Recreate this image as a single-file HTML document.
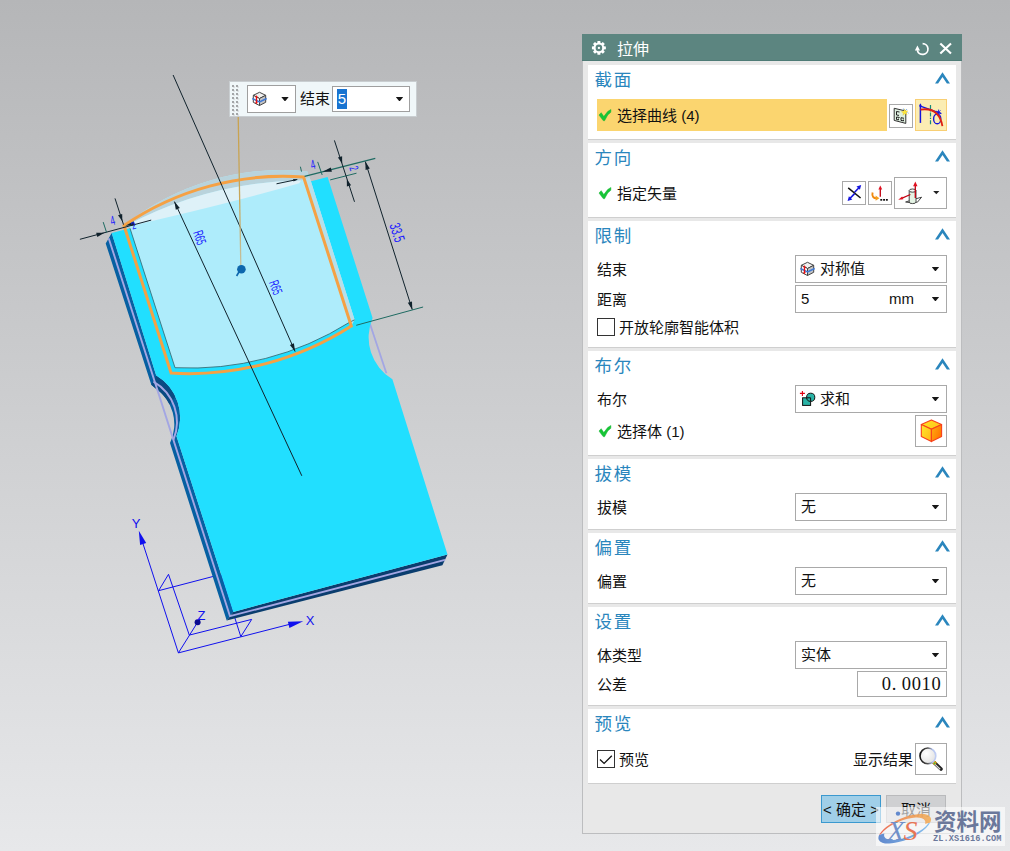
<!DOCTYPE html>
<html lang="zh-CN">
<head>
<meta charset="utf-8">
<title>拉伸</title>
<style>
*{box-sizing:border-box;margin:0;padding:0}
html,body{width:1010px;height:851px;overflow:hidden}
body{position:relative;font-family:"Liberation Sans","Noto Sans CJK SC",sans-serif;font-size:15px;color:#111;
 background:linear-gradient(180deg,#b5b6b8 0%,#e7e8ea 100%)}
.abs{position:absolute}
.cj{color:inherit}
#scene{position:absolute;left:0;top:0;width:1010px;height:851px}
/* dialog */
#dlg{position:absolute;left:582px;top:34px;width:380px;height:800px;background:#e8e8e8;border:1px solid #bcbdbf;border-top:none}
#ttl{position:absolute;left:-1px;top:0;width:380px;height:27px;background:#5c8580;border-bottom:1px solid #4f7b76;color:#fff;font-size:16px;line-height:26px}
#ttl span{position:absolute;left:35px;top:2.5px}
.sec{position:absolute;left:5px;width:368px;background:#fff;border-bottom:1px solid #cfcfcf}
.hd{position:absolute;left:6.5px;top:4px;font-size:17.5px;letter-spacing:1.8px;line-height:22px;color:#2a86bd;white-space:nowrap}
.chev{position:absolute;left:347px;top:7.3px;width:15px;height:12px}
.lbl{position:absolute;left:9px;line-height:20px;white-space:nowrap;margin-top:1px}
.combo{position:absolute;left:207px;width:152px;height:28px;border:1px solid #a9a9a9;background:#fff;line-height:26px;white-space:nowrap}
.combo .tx{position:absolute;left:5px;top:0}
.combo .ar,.ar2{position:absolute;right:6.9px;top:11px;width:7.4px;height:4.4px;background:#161616;clip-path:polygon(0 0,100% 0,50% 100%)}
.btn{position:absolute;border:1px solid #a9a9a9;background:#fff}
.chk{position:absolute;left:9px;width:18px;height:18px;border:1px solid #333;background:#fff}
.tick{position:absolute;left:9px;width:14px;height:12px}
</style>
</head>
<body>
<svg id="scene" viewBox="0 0 1010 851">
<polyline points="141.3,538.5 178.4,652.9 292.0,623.7" fill="none" stroke="#1010ee" stroke-width="1"/>
<polyline points="158.6,590.7 221.0,574.4 240.8,636.6" fill="none" stroke="#1010ee" stroke-width="1"/>
<polyline points="158.6,590.7 168.5,574.3 189.3,635.1 251.7,619.4 240.8,636.6" fill="none" stroke="#1010ee" stroke-width="1"/>
<polyline points="178.4,652.9 196.5,624.0" fill="none" stroke="#1010ee" stroke-width="1"/>
<path d="M138.8,530.7 L146.2,543.0 L140.1,545.0 Z" fill="#1010ee"/>
<path d="M303.2,621.2 L289.4,628.0 L287.9,621.8 Z" fill="#1010ee"/>
<circle cx="197.6" cy="622.2" r="3" fill="#0a0a90"/>
<text x="310" y="624.5" font-family="Liberation Sans, sans-serif" font-size="13" fill="#1010ee" text-anchor="middle">X</text>
<text x="136.2" y="528" font-family="Liberation Sans, sans-serif" font-size="13" fill="#1010ee" text-anchor="middle">Y</text>
<text x="201.5" y="619.5" font-family="Liberation Sans, sans-serif" font-size="13" fill="#1010ee" text-anchor="middle">Z</text>
<path d="M111.7,232.9 L156.2,375.4 A49.3,49.3 0 0 1 176.5,436.3 L233.3,611.9 L226.7,620.6 L170,443 A43.6,43.6 0 0 0 154.8,387.8 L151.3,384.8 L105.7,243.4 Z" fill="#0660a2"/>
<path d="M156.2,375.4 A49.3,49.3 0 0 1 175.5,396.7 L169.6,404.6 A43.6,43.6 0 0 0 154.8,387.8 L151.3,384.8 Z" fill="#0a4a82"/>
<path d="M233.3,611.9 L447.5,554.5 L442.4,565.2 L226.7,620.6 Z" fill="#0a3d6e"/>
<path d="M108.7,238.2 L230.0,616.2 L445,559.8" fill="none" stroke="#a3a6e3" stroke-width="1.9" stroke-linejoin="round"/>
<path d="M153.4,381.6 A46.4,46.4 0 0 1 173.4,439.8" fill="none" stroke="#a3a6e3" stroke-width="1.9"/>
<path d="M370.1,324.3 L386.4,373.3" fill="none" stroke="#a3a6e3" stroke-width="1.8"/>
<path d="M111.7,232.9 L327.6,177.0 L372.6,317.9 A49,49 0 0 0 392.4,379.3 L447.5,554.5 L233.3,611.9 L176.5,436.3 A49.3,49.3 0 0 0 156.2,375.4 Z" fill="#21dfff"/>
<path d="M127,226.5 L124.0,225.5 A252,252 0 0 1 307.2,171.4 L310.8,181 L354.6,319.8 L349.5,322.3 A300,300 0 0 1 175,367.7 L129.6,227 Z" fill="#aeecfb"/>
<path d="M303.6,177.1 L307.2,171.4 L310.8,181 L354.6,319.8 L351.3,326.0 Z" fill="#b7dfea"/>
<path d="M124.0,225.5 A252,252 0 0 1 307.2,171.4 L309.4,177.6 L301,180.4 A385,385 0 0 0 125.5,226.1 Z" fill="#b9d3dc"/>
<path d="M125.5,226.1 A385,385 0 0 1 301,180.4 L299.3,183.3 Q230,203.4 127,226.8 Z" fill="#def1f8"/>
<path d="M130,228.3 L175,367.7 A300,300 0 0 0 349.5,322.3 L354.6,319.8" fill="none" stroke="#3a6f78" stroke-width="0.9"/>
<path d="M124.0,225.5 A282.5,282.5 0 0 1 303.6,177.1 L351.3,326.0 A300,300 0 0 1 171.1,373.1 Z" fill="none" stroke="#f5a144" stroke-width="3" stroke-linejoin="miter"/>
<line x1="173.1" y1="75" x2="295.1" y2="351.5" stroke="#10222c" stroke-width="1"/>
<path d="M295.1,351.5 L289.9,345.1 L293.9,343.3 Z" fill="#10222c"/>
<line x1="301.8" y1="475.8" x2="174.4" y2="201.6" stroke="#10222c" stroke-width="1"/>
<path d="M174.4,201.6 L179.8,207.9 L175.8,209.8 Z" fill="#10222c"/>
<line x1="79.9" y1="239.3" x2="151.2" y2="220.1" stroke="#10222c" stroke-width="1"/>
<path d="M104.5,232.8 L97.3,237.0 L96.2,232.8 Z" fill="#10222c"/>
<path d="M125.5,225.7 L133.6,221.2 L134.8,225.5 Z" fill="#10222c"/>
<line x1="115" y1="198.4" x2="123.5" y2="224.6" stroke="#10222c" stroke-width="1"/>
<path d="M122.3,221.2 L118.0,215.2 L122.2,213.9 Z" fill="#10222c"/>
<line x1="103.2" y1="222.1" x2="106.6" y2="232.5" stroke="#1f6b62" stroke-width="1"/>
<line x1="304.6" y1="176.4" x2="375.3" y2="158.4" stroke="#1f6b62" stroke-width="1.2"/>
<line x1="330.2" y1="179.9" x2="356.5" y2="173.2" stroke="#1f6b62" stroke-width="1"/>
<line x1="334.4" y1="140.4" x2="354.5" y2="201.8" stroke="#10222c" stroke-width="1"/>
<path d="M342.2,163.6 L337.9,157.6 L342.1,156.3 Z" fill="#10222c"/>
<path d="M346.8,179.2 L351.1,185.2 L346.9,186.5 Z" fill="#10222c"/>
<path d="M322.6,171.8 L330.8,167.4 L331.9,171.7 Z" fill="#10222c"/>
<line x1="300.4" y1="166.7" x2="301.5" y2="171.6" stroke="#1f6b62" stroke-width="1"/>
<line x1="317.7" y1="161.9" x2="322.2" y2="175" stroke="#1f6b62" stroke-width="1"/>
<line x1="276.5" y1="183.8" x2="297.3" y2="179.5" stroke="#10222c" stroke-width="1"/>
<path d="M297.3,179.5 L293.6,181.5 L293.1,179.1 Z" fill="#10222c"/>
<line x1="365.3" y1="161.6" x2="412.3" y2="309.7" stroke="#10222c" stroke-width="1"/>
<path d="M365.3,161.6 L369.8,168.6 L365.6,169.9 Z" fill="#10222c"/>
<path d="M412.3,309.7 L407.8,302.7 L412.0,301.4 Z" fill="#10222c"/>
<line x1="356.2" y1="325.3" x2="423.1" y2="307" stroke="#1f6b62" stroke-width="1"/>
<text transform="translate(192.9,232.5) rotate(71) scale(0.55,1)" font-family="Liberation Sans, sans-serif" font-size="14" fill="#1c1cff">R65</text>
<text transform="translate(268.8,282.5) rotate(69) scale(0.55,1)" font-family="Liberation Sans, sans-serif" font-size="14" fill="#1c1cff">R65</text>
<text transform="translate(389.3,225.0) rotate(72.5) scale(0.64,1)" font-family="Liberation Sans, sans-serif" font-size="15.3" fill="#1c1cff">33.5</text>
<text transform="translate(111.6,225.4) rotate(-14) scale(0.62,1)" font-family="Liberation Sans, sans-serif" font-size="13.2" fill="#1c1cff">4</text>
<text transform="translate(311.8,169.4) rotate(-14) scale(0.62,1)" font-family="Liberation Sans, sans-serif" font-size="13.2" fill="#1c1cff">4</text>
<text transform="translate(349.2,167.6) rotate(74) scale(0.6,1)" font-family="Liberation Sans, sans-serif" font-size="12.5" fill="#1c1cff">2</text>
<text transform="translate(132.5,229.5) rotate(-14) scale(0.77,1)" font-family="Liberation Sans, sans-serif" font-size="9.8" fill="#1c1cff">2</text>
<defs><linearGradient id="tan" x1="0" y1="0" x2="0" y2="1"><stop offset="0" stop-color="#c9a24e"/><stop offset="0.55" stop-color="#c8a659"/><stop offset="1" stop-color="#c4c1a0"/></linearGradient></defs>
<path d="M238.2,116 L240.8,265" stroke="url(#tan)" stroke-width="1.3" fill="none"/>
<circle cx="241.4" cy="269.2" r="4.3" fill="#0d67ad"/><path d="M239.5,271 L236.6,276" stroke="#0d67ad" stroke-width="1.6"/>
</svg>

<div id="osd" class="abs" style="left:229px;top:81px;width:188px;height:36px;background:#f0f7f9;border:1px solid #c9ced1">
 <svg class="abs" style="left:0px;top:0px" width="12" height="34" viewBox="0 0 12 34"><g fill="#dde1e3"><rect x="3" y="4" width="2" height="2"/><rect x="7" y="4" width="2" height="2"/><rect x="3" y="8" width="2" height="2"/><rect x="7" y="8" width="2" height="2"/><rect x="3" y="12" width="2" height="2"/><rect x="7" y="12" width="2" height="2"/><rect x="3" y="16" width="2" height="2"/><rect x="7" y="16" width="2" height="2"/><rect x="3" y="20" width="2" height="2"/><rect x="7" y="20" width="2" height="2"/><rect x="3" y="24" width="2" height="2"/><rect x="7" y="24" width="2" height="2"/><rect x="3" y="28" width="2" height="2"/><rect x="7" y="28" width="2" height="2"/><rect x="3" y="32" width="2" height="2"/><rect x="7" y="32" width="2" height="2"/></g><g fill="#a3a6a8"><rect x="2" y="3" width="2" height="2"/><rect x="6" y="3" width="2" height="2"/><rect x="2" y="7" width="2" height="2"/><rect x="6" y="7" width="2" height="2"/><rect x="2" y="11" width="2" height="2"/><rect x="6" y="11" width="2" height="2"/><rect x="2" y="15" width="2" height="2"/><rect x="6" y="15" width="2" height="2"/><rect x="2" y="19" width="2" height="2"/><rect x="6" y="19" width="2" height="2"/><rect x="2" y="23" width="2" height="2"/><rect x="6" y="23" width="2" height="2"/><rect x="2" y="27" width="2" height="2"/><rect x="6" y="27" width="2" height="2"/><rect x="2" y="31" width="2" height="2"/><rect x="6" y="31" width="2" height="2"/></g></svg>
 <div class="abs" style="left:17px;top:3px;width:49px;height:28px;border:1px solid #9f9f9f;background:#fff"><i class="ar2" style="left:33.3px;right:auto;top:11px"></i></div>
 <div class="abs" style="left:70px;top:7px;line-height:20px;white-space:nowrap"><span class="cj">结束</span></div>
 <div class="abs" style="left:102px;top:4px;width:78px;height:26px;border:1px solid #9f9f9f;background:#fff">
  <span class="abs" style="left:4px;top:2px;width:10px;height:20px;background:#1874d1;color:#fff;line-height:20px;text-align:center">5</span>
  <i class="ar2" style="left:62.8px;right:auto;top:10px"></i>
 </div>
</div>

<div id="dlg">
 <div id="ttl"><span class="cj">拉伸</span></div>

 <div class="sec" style="top:31px;height:75px">
  <div class="hd"><span class="cj">截面</span></div>
  <svg class="chev" viewBox="0 0 15 12"><path d="M0 11.6 L7.5 0.2 L15 11.6 L11.9 11.6 L7.5 4.9 L3.1 11.6Z" fill="#2a86bd"/></svg>
  <div class="abs" style="left:9px;top:34px;width:290px;height:32px;background:#fbd56f"></div>
  <div class="lbl" style="left:29px;top:40px"><span class="cj">选择曲线</span></div><div class="lbl" style="left:93.2px;top:40px">(4)</div>
  <div class="btn" style="left:301px;top:39px;width:24px;height:24px"></div>
  <div class="btn" style="left:327px;top:34px;width:32px;height:32px;background:#fbedb3;border-color:#f8cf74"></div>
 </div>

 <div class="sec" style="top:109px;height:75px">
  <div class="hd"><span class="cj">方向</span></div>
  <svg class="chev" viewBox="0 0 15 12"><path d="M0 11.6 L7.5 0.2 L15 11.6 L11.9 11.6 L7.5 4.9 L3.1 11.6Z" fill="#2a86bd"/></svg>
  <div class="lbl" style="left:29px;top:40px"><span class="cj">指定矢量</span></div>
  <div class="btn" style="left:254px;top:38px;width:24px;height:24px"></div>
  <div class="btn" style="left:280px;top:38px;width:24px;height:24px"></div>
  <div class="btn" style="left:306px;top:34px;width:53px;height:32px"></div>
 </div>

 <div class="sec" style="top:187px;height:127px">
  <div class="hd"><span class="cj">限制</span></div>
  <svg class="chev" viewBox="0 0 15 12"><path d="M0 11.6 L7.5 0.2 L15 11.6 L11.9 11.6 L7.5 4.9 L3.1 11.6Z" fill="#2a86bd"/></svg>
  <div class="lbl" style="top:38px"><span class="cj">结束</span></div>
  <div class="combo" style="top:34px"><span class="tx" style="left:24px"><span class="cj">对称值</span></span><i class="ar"></i></div>
  <div class="lbl" style="top:68px"><span class="cj">距离</span></div>
  <div class="combo" style="top:64px"><span class="tx">5</span><span class="tx" style="left:93px">mm</span><i class="ar"></i></div>
  <div class="chk" style="top:97px"></div>
  <div class="lbl" style="left:31px;top:96px"><span class="cj">开放轮廓智能体积</span></div>
 </div>

 <div class="sec" style="top:317px;height:105px">
  <div class="hd"><span class="cj">布尔</span></div>
  <svg class="chev" viewBox="0 0 15 12"><path d="M0 11.6 L7.5 0.2 L15 11.6 L11.9 11.6 L7.5 4.9 L3.1 11.6Z" fill="#2a86bd"/></svg>
  <div class="lbl" style="top:38px"><span class="cj">布尔</span></div>
  <div class="combo" style="top:34px"><span class="tx" style="left:24px"><span class="cj">求和</span></span><i class="ar"></i></div>
  <div class="lbl" style="left:29px;top:70px"><span class="cj">选择体</span></div><div class="lbl" style="left:78.2px;top:70px">(1)</div>
  <div class="btn" style="left:327px;top:64px;width:32px;height:32px"></div>
 </div>

 <div class="sec" style="top:425px;height:71px">
  <div class="hd"><span class="cj">拔模</span></div>
  <svg class="chev" viewBox="0 0 15 12"><path d="M0 11.6 L7.5 0.2 L15 11.6 L11.9 11.6 L7.5 4.9 L3.1 11.6Z" fill="#2a86bd"/></svg>
  <div class="lbl" style="top:38px"><span class="cj">拔模</span></div>
  <div class="combo" style="top:34px"><span class="tx"><span class="cj">无</span></span><i class="ar"></i></div>
 </div>

 <div class="sec" style="top:499px;height:71px">
  <div class="hd"><span class="cj">偏置</span></div>
  <svg class="chev" viewBox="0 0 15 12"><path d="M0 11.6 L7.5 0.2 L15 11.6 L11.9 11.6 L7.5 4.9 L3.1 11.6Z" fill="#2a86bd"/></svg>
  <div class="lbl" style="top:38px"><span class="cj">偏置</span></div>
  <div class="combo" style="top:34px"><span class="tx"><span class="cj">无</span></span><i class="ar"></i></div>
 </div>

 <div class="sec" style="top:573px;height:99px">
  <div class="hd"><span class="cj">设置</span></div>
  <svg class="chev" viewBox="0 0 15 12"><path d="M0 11.6 L7.5 0.2 L15 11.6 L11.9 11.6 L7.5 4.9 L3.1 11.6Z" fill="#2a86bd"/></svg>
  <div class="lbl" style="top:38px"><span class="cj">体类型</span></div>
  <div class="combo" style="top:34px"><span class="tx"><span class="cj">实体</span></span><i class="ar"></i></div>
  <div class="lbl" style="top:67px"><span class="cj">公差</span></div>
  <div class="btn" style="left:269px;top:64px;width:90px;height:26px;font-family:'Liberation Serif',serif;font-size:18.5px;line-height:24px;text-align:right;padding-right:4.5px;letter-spacing:0.7px;white-space:nowrap">0<span style="display:inline-block;width:9.9px;text-align:left;letter-spacing:0">.</span>0010</div>
 </div>

 <div class="sec" style="top:675px;height:75px">
  <div class="hd"><span class="cj">预览</span></div>
  <svg class="chev" viewBox="0 0 15 12"><path d="M0 11.6 L7.5 0.2 L15 11.6 L11.9 11.6 L7.5 4.9 L3.1 11.6Z" fill="#2a86bd"/></svg>
  <div class="chk" style="top:41px"></div>
  <div class="lbl" style="left:31px;top:40px"><span class="cj">预览</span></div>
  <div class="lbl" style="left:265px;top:40px"><span class="cj">显示结果</span></div>
  <div class="btn" style="left:327px;top:34px;width:32px;height:32px"></div>
 </div>

 <div class="abs" style="left:238px;top:761px;width:60px;height:28px;background:#a0cfe8;border:1px solid #3b99cf;text-align:center;line-height:27px;white-space:nowrap"><span class="abs" style="left:1.1px;top:0">&lt;</span><span class="abs" style="left:14px;top:0"><span class="cj">确定</span></span><span class="abs" style="left:48.2px;top:0">&gt;</span></div>
 <div class="abs" style="left:303px;top:761px;width:60px;height:28px;background:#cfd0d2;border:1px solid #b9babc;text-align:center;line-height:27px;white-space:nowrap"><span class="cj">取消</span></div>
</div>

<svg id="icons" class="abs" style="left:0;top:0;pointer-events:none" width="1010" height="851" viewBox="0 0 1010 851">
<path d="M597.49,40.94 L600.31,40.94 L600.47,42.84 L601.37,43.21 L602.82,41.98 L604.82,43.98 L603.59,45.43 L603.96,46.33 L605.86,46.49 L605.86,49.31 L603.96,49.47 L603.59,50.37 L604.82,51.82 L602.82,53.82 L601.37,52.59 L600.47,52.96 L600.31,54.86 L597.49,54.86 L597.33,52.96 L596.43,52.59 L594.98,53.82 L592.98,51.82 L594.21,50.37 L593.84,49.47 L591.94,49.31 L591.94,46.49 L593.84,46.33 L594.21,45.43 L592.98,43.98 L594.98,41.98 L596.43,43.21 L597.33,42.84Z" fill="#fff"/>
<circle cx="598.9" cy="47.9" r="3.3" fill="#5c8580"/><rect x="597.9" y="46.9" width="2" height="2" fill="#fff"/>
<path d="M922.6,43.6 A5.4,5.4 0 1 1 917.3,50.2" fill="none" stroke="#fff" stroke-width="1.7"/><path d="M914.9,50.4 L917.4,45.6 L920,50.4 Z" fill="#fff"/>
<path d="M940.3,43.4 L951,53.6 M951,43.4 L940.3,53.6" stroke="#fff" stroke-width="2.1" fill="none"/>
<path d="M599.0,115.0 L601.2,112.7 L603.8,116.6 L607.7,111.5 L610.9,109.5 L610.8,112.3 L607.7,115.0 L604.5,120.8 L603.2,120.6Z" fill="#16c636" stroke="#0fb02c" stroke-width="0.5"/>
<path d="M599.0,193.0 L601.2,190.7 L603.8,194.6 L607.7,189.5 L610.9,187.5 L610.8,190.3 L607.7,193.0 L604.5,198.8 L603.2,198.6Z" fill="#16c636" stroke="#0fb02c" stroke-width="0.5"/>
<path d="M599.0,431.0 L601.2,428.7 L603.8,432.6 L607.7,427.5 L610.9,425.5 L610.8,428.3 L607.7,431.0 L604.5,436.8 L603.2,436.6Z" fill="#16c636" stroke="#0fb02c" stroke-width="0.5"/>
<path d="M894.2,108.3 L905.8,111 L905.8,123.4 L894.2,120.4 Z" fill="#dff0e0" stroke="#333" stroke-width="1"/>
<path d="M899.5,112 L896.5,111.5 L896.5,115 L899,115.4 M899.6,117.5 L896.5,117 L896.5,119.5 L898.5,119.9 L898.5,118.6 M904,118.3 L901,117.7 L901,120.4 L903.5,120.9 L903.5,119.6" fill="none" stroke="#222" stroke-width="1"/>
<path d="M904.6,108.9 L905.4,111 L907.8,110.9 L906,112.5 L907,114.8 L904.8,113.5 L902.9,115.3 L903.4,112.9 L901.4,111.7 L903.7,111.4 Z" fill="#ffe93a" stroke="#e8c820" stroke-width="0.4"/>
<path d="M903.4,108.6 L904,110 M907.6,112.6 L908.5,113.2 M906.8,109.2 L906.2,110" stroke="#4a8ad8" stroke-width="0.8"/>
<path d="M920.4,104.5 L920.4,122.9" stroke="#1414dd" stroke-width="1.5"/><path d="M919,106.4 L920.4,103.2 L921.8,106.4Z" fill="#1414dd"/>
<path d="M920.4,106.2 L941.4,113.6" stroke="#1414dd" stroke-width="1.3"/>
<path d="M930.5,105 L930.5,125.5" stroke="#178a7a" stroke-width="1.2" stroke-dasharray="4 1.2 1.2 1.2"/>
<ellipse cx="937.2" cy="118.9" rx="3.6" ry="4.9" fill="none" stroke="#1414dd" stroke-width="1.4"/>
<path d="M938.6,109.6 L938.6,114.6 M936.4,111.2 L940.8,113.2 M940.4,110.4 L936.8,114" stroke="#1414dd" stroke-width="0.9"/>
<path d="M920.4,109.6 C931,108 940,112 942.4,126.2" fill="none" stroke="#e02010" stroke-width="1.8"/>
<path d="M848.2,187.8 L860.6,198" stroke="#111" stroke-width="1.5"/>
<path d="M854.6,193.6 L849.6,198.8" stroke="#1414dd" stroke-width="1.6"/><path d="M847.6,200.9 L848.9,196.3 L852.3,199.5Z" fill="#1414dd"/>
<path d="M854.6,192.2 L859.4,187.2" stroke="#1414dd" stroke-width="1.6"/><path d="M861.2,185.1 L859.9,189.7 L856.5,186.5Z" fill="#1414dd"/>
<path d="M880.3,188.5 L880.3,196.8" stroke="#c00010" stroke-width="1.3"/><path d="M878.4,189.6 L880.3,185.6 L882.2,189.6Z" fill="#e01020"/>
<path d="M872.6,192.4 C871.6,196.2 873.6,198.4 876.6,198.3" fill="none" stroke="#f08a10" stroke-width="1.9"/><path d="M875.6,195.6 L879.4,198.2 L875.6,200.8Z" fill="#f8a020"/>
<rect x="880.3" y="199" width="1.9" height="1.7" fill="#111"/><rect x="883.1" y="199" width="1.9" height="1.7" fill="#111"/><rect x="885.9" y="199" width="1.9" height="1.7" fill="#111"/>
<path d="M905.6,202 L914.4,199.2 L921.6,197.2 L917.4,202.2 L909.6,202.6 Z" fill="#fff" stroke="#333" stroke-width="0.9"/>
<path d="M909.2,190.6 L909.2,202 A3.4,1.6 0 0 0 916,202 L916,190.6" fill="#e4f3e4" stroke="#333" stroke-width="0.9"/><ellipse cx="912.6" cy="190.6" rx="3.4" ry="1.6" fill="#f6faf6" stroke="#333" stroke-width="0.9"/>
<path d="M915.3,185 L915.3,198" stroke="#c00010" stroke-width="1.3"/><path d="M913.1,186.2 L915.3,181.6 L917.5,186.2Z" fill="#e01020"/>
<path d="M910.4,194.5 L901,198.6" stroke="#c00010" stroke-width="1.2"/><path d="M898.2,199.8 L902.2,196.4 L903.4,199.3Z" fill="#e01020"/>
<path d="M933.2,190.9 L939.4,190.9 L936.3,194.2Z" fill="#222"/>
<path d="M807.5,262.29999999999995 L813.7,265.29999999999995 L807.5,268.5 L801.3,265.29999999999995Z" fill="#f1f1f1" stroke="#444" stroke-width="1"/>
<path d="M801.3,265.29999999999995 L807.5,268.5 L807.5,275.5 L801.3,272.29999999999995Z" fill="#fff" stroke="#444" stroke-width="1"/>
<path d="M813.7,265.29999999999995 L807.5,268.5 L807.5,275.5 L813.7,272.29999999999995Z" fill="#c4c4c4" stroke="#444" stroke-width="1"/>
<path d="M800.3,268.5 L807.5,271.9 L814.7,268.5" fill="none" stroke="#3e78d6" stroke-width="1.5"/>
<path d="M804.5,266.7 L804.5,272.9" stroke="#e81010" stroke-width="1.4"/><path d="M803.1,267.29999999999995 L804.5,265.29999999999995 L805.9,267.29999999999995Z M803.1,272.29999999999995 L804.5,274.29999999999995 L805.9,272.29999999999995Z" fill="#e81010"/>
<path d="M259.5,92.30000000000001 L265.7,95.30000000000001 L259.5,98.5 L253.3,95.30000000000001Z" fill="#f1f1f1" stroke="#444" stroke-width="1"/>
<path d="M253.3,95.30000000000001 L259.5,98.5 L259.5,105.5 L253.3,102.30000000000001Z" fill="#fff" stroke="#444" stroke-width="1"/>
<path d="M265.7,95.30000000000001 L259.5,98.5 L259.5,105.5 L265.7,102.30000000000001Z" fill="#c4c4c4" stroke="#444" stroke-width="1"/>
<path d="M252.3,98.5 L259.5,101.9 L266.7,98.5" fill="none" stroke="#3e78d6" stroke-width="1.5"/>
<path d="M256.5,96.7 L256.5,102.9" stroke="#e81010" stroke-width="1.4"/><path d="M255.1,97.30000000000001 L256.5,95.30000000000001 L257.9,97.30000000000001Z M255.1,102.30000000000001 L256.5,104.30000000000001 L257.9,102.30000000000001Z" fill="#e81010"/>
<path d="M799.9,393.4 L904.9,393.4" stroke="none"/>
<path d="M799.9,393.4 L804.9,393.4 M802.4,390.9 L802.4,395.9" stroke="#e00010" stroke-width="1.1"/>
<rect x="802.6" y="397.8" width="8" height="7.6" fill="#2ab3a6" stroke="#111" stroke-width="1"/>
<circle cx="810.7" cy="397.3" r="4.1" fill="#2ab3a6" stroke="#111" stroke-width="1"/>
<path d="M806.6,397.8 L810.6,397.8 L810.6,401.4" fill="none" stroke="#111" stroke-width="1"/>
<defs><linearGradient id="cg1" x1="0" y1="0" x2="1" y2="1"><stop offset="0" stop-color="#ffe92a"/><stop offset="1" stop-color="#ffb418"/></linearGradient><linearGradient id="cg2" x1="0" y1="0" x2="1" y2="0.6"><stop offset="0" stop-color="#ffb010"/><stop offset="1" stop-color="#ff7400"/></linearGradient><linearGradient id="cg3" x1="0" y1="0" x2="1" y2="0.4"><stop offset="0" stop-color="#ffe422"/><stop offset="1" stop-color="#ffc81c"/></linearGradient></defs>
<path d="M931.4,419.9 L941.6,424.6 L931.4,429.3 L921.3,424.6Z" fill="url(#cg3)" stroke="#f8401c" stroke-width="1.1" stroke-linejoin="round"/>
<path d="M921.3,424.6 L931.4,429.3 L931.4,441.6 L921.3,436.6Z" fill="url(#cg1)" stroke="#f8401c" stroke-width="1.1" stroke-linejoin="round"/>
<path d="M941.6,424.6 L931.4,429.3 L931.4,441.6 L941.6,436.6Z" fill="url(#cg2)" stroke="#f8401c" stroke-width="1.1" stroke-linejoin="round"/>
<defs><radialGradient id="lens" cx="0.4" cy="0.35" r="0.8"><stop offset="0" stop-color="#ffffff"/><stop offset="1" stop-color="#dcdcdc"/></radialGradient><linearGradient id="ring" x1="0" y1="0" x2="1" y2="0"><stop offset="0" stop-color="#111"/><stop offset="0.5" stop-color="#555"/><stop offset="0.8" stop-color="#b4c4f0"/><stop offset="1" stop-color="#c0cef4"/></linearGradient></defs>
<path d="M934,762.4 L941,769" stroke="#222" stroke-width="3.6" stroke-linecap="round"/><path d="M934.4,763.6 L940.2,769.2" stroke="#d8d8d8" stroke-width="1.2"/>
<path d="M933.2,761.6 L935.8,764" stroke="#e0a010" stroke-width="3.4"/><circle cx="934.6" cy="763.4" r="0.8" fill="#30c050"/>
<circle cx="927.9" cy="755.9" r="7.9" fill="url(#lens)" stroke="url(#ring)" stroke-width="1.6"/>
<path d="M600,759.6 L604.1,763.4 L611.8,755.8" fill="none" stroke="#111" stroke-width="1.3"/>
</svg>
<div id="wm" class="abs" style="left:876px;top:807px;width:129px;height:39px;background:rgba(255,255,255,.6);overflow:hidden">
 <svg id="wmsvg" class="abs" style="left:0;top:0" width="129" height="39" viewBox="0 0 129 39">
<defs><linearGradient id="wgb" x1="0" y1="0" x2="1" y2="0"><stop offset="0" stop-color="#4878c8"/><stop offset="1" stop-color="#78bcf0"/></linearGradient><linearGradient id="wgo" x1="0" y1="0" x2="1" y2="0"><stop offset="0" stop-color="#e8483a"/><stop offset="0.5" stop-color="#f08848"/><stop offset="1" stop-color="#f2ac52"/></linearGradient>
<clipPath id="cpb"><path d="M-32,-5.5 L32,5.5 L32,20 L-32,20Z"/></clipPath><clipPath id="cpo"><path d="M-32,-5.5 L32,5.5 L32,-20 L-32,-20Z"/></clipPath></defs>
<g opacity="0.85">
<g transform="translate(28.7,21.7) rotate(-23)">
<path clip-path="url(#cpb)" fill-rule="evenodd" fill="url(#wgb)" d="M-28.2,0 A28.2,10.8 0 1 0 28.2,0 A28.2,10.8 0 1 0 -28.2,0 Z M-21.8,-0.6 A24.6,9.4 0 1 1 27.4,-0.6 A24.6,9.4 0 1 1 -21.8,-0.6 Z"/>
<path clip-path="url(#cpo)" fill-rule="evenodd" fill="url(#wgo)" d="M-28.2,0 A28.2,10.8 0 1 0 28.2,0 A28.2,10.8 0 1 0 -28.2,0 Z M-27.4,0.6 A24.6,9.4 0 1 1 21.8,0.6 A24.6,9.4 0 1 1 -27.4,0.6 Z"/>
</g>
<circle cx="22" cy="6.6" r="2.2" fill="#4a78c8"/>
<text x="11.5" y="32.5" font-family="Liberation Serif, serif" font-style="italic" font-size="28" fill="#5a80c2">X</text>
<text x="27.5" y="32.5" font-family="Liberation Serif, serif" font-style="italic" font-size="28" fill="#e6603a">S</text>
</g>
</svg>
 <div class="abs" style="left:58px;top:3px;font-size:22.5px;line-height:26px;font-weight:bold;color:#6b789b;white-space:nowrap;letter-spacing:0px"><span class="cj">资料网</span></div>
 <div class="abs" style="left:57px;top:26.5px;font-family:'Liberation Mono',monospace;font-size:8.6px;line-height:10px;font-weight:bold;color:#6b789b;white-space:nowrap;letter-spacing:0.12px">ZL.XS1616.COM</div>
</div>
</body>
</html>
